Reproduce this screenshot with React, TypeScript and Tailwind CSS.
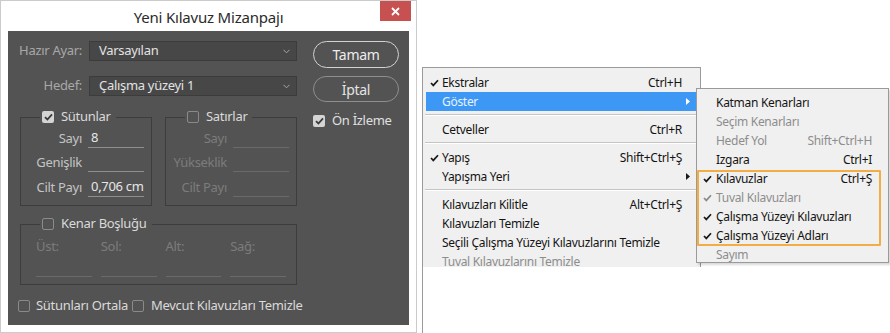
import React from "react";

const UI = { fontFamily: '"Noto Sans", "Liberation Sans", sans-serif' };

function Check({ on, dim }: { on?: boolean; dim?: boolean }) {
  if (on) {
    return (
      <span className="w-[12px] h-[12px] rounded-[2px] bg-[#d4d4d4] flex items-center justify-center shrink-0">
        <svg width="9" height="8" viewBox="0 0 9 8">
          <path d="M1 4.2 L3.4 6.5 L8 1.3" fill="none" stroke="#3a3a3a" strokeWidth="1.8" />
        </svg>
      </span>
    );
  }
  return (
    <span
      className={
        "block w-[12px] h-[12px] rounded-[2px] border shrink-0 " +
        (dim ? "border-[#6f6f6f]" : "border-[#8a8a8a]")
      }
    />
  );
}

function Field({ label, value, off }: { label: string; value?: string; off?: boolean }) {
  return (
    <div className="flex items-center h-[19px]">
      <span className={"w-[61px] text-right whitespace-nowrap " + (off ? "text-[#7c7c7c]" : "text-[#c4c4c4]")}>{label}</span>
      <span
        className={
          "ml-[6px] w-[56px] h-full border-b flex items-center pl-[3px] whitespace-nowrap text-[#e6e6e6] " +
          (off ? "border-[#6a6a6a]" : "border-[#8e8e8e]")
        }
      >
        {value}
      </span>
    </div>
  );
}

function Select({ text }: { text: string }) {
  return (
    <div className="ml-[7px] w-[208px] h-[20px] bg-[#474747] border border-[#3c3c3c] flex items-center pl-[9px] pr-[6px] text-[#e2e2e2]">
      <span className="flex-1 whitespace-nowrap">{text}</span>
      <svg width="7" height="5" viewBox="0 0 7 5">
        <path d="M0.5 0.8 L3.5 3.8 L6.5 0.8" fill="none" stroke="#a8a8a8" strokeWidth="1" />
      </svg>
    </div>
  );
}

function Group({ title, checked, children, w }: { title: string; checked?: boolean; children: React.ReactNode; w: string }) {
  return (
    <fieldset className={"border border-[#3d3d3d] " + w}>
      <legend className="ml-[19px] px-[2px] flex items-center gap-[7px] h-[16px]">
        <Check on={checked} />
        <span className="text-[#dadada] pr-[3px] whitespace-nowrap">{title}</span>
      </legend>
      {children}
    </fieldset>
  );
}

function Tick({ dim }: { dim?: boolean }) {
  return (
    <svg width="9" height="8" viewBox="0 0 9 8">
      <path d="M1 4 L3.3 6.4 L8 1.2" fill="none" stroke={dim ? "#8a8a8a" : "#1a1a1a"} strokeWidth="1.7" />
    </svg>
  );
}

type Item = { t: string; k?: string; tick?: boolean; off?: boolean; sub?: boolean; hi?: boolean; sep?: boolean };

const mainItems: Item[] = [
  { t: "Ekstralar", k: "Ctrl+H", tick: true },
  { t: "Göster", sub: true, hi: true },
  { t: "", sep: true },
  { t: "Cetveller", k: "Ctrl+R" },
  { t: "", sep: true },
  { t: "Yapış", k: "Shift+Ctrl+Ş", tick: true },
  { t: "Yapışma Yeri", sub: true },
  { t: "", sep: true },
  { t: "Kılavuzları Kilitle", k: "Alt+Ctrl+Ş" },
  { t: "Kılavuzları Temizle" },
  { t: "Seçili Çalışma Yüzeyi Kılavuzlarını Temizle" },
  { t: "Tuval Kılavuzlarını Temizle", off: true },
];

const subItems: Item[] = [
  { t: "Katman Kenarları" },
  { t: "Seçim Kenarları", off: true },
  { t: "Hedef Yol", k: "Shift+Ctrl+H", off: true },
  { t: "Izgara", k: "Ctrl+I" },
  { t: "Kılavuzlar", k: "Ctrl+Ş", tick: true },
  { t: "Tuval Kılavuzları", tick: true, off: true },
  { t: "Çalışma Yüzeyi Kılavuzları", tick: true },
  { t: "Çalışma Yüzeyi Adları", tick: true },
  { t: "Sayım", off: true },
];

function MenuRow({ it, sub }: { it: Item; sub?: boolean }) {
  if (it.sep) {
    return (
      <div className="h-[9px] pt-[3px] mx-[2px]">
        <div className="h-[1px] bg-[#c5c5c5]" />
        <div className="h-[1px] bg-white" />
      </div>
    );
  }
  const color = it.hi ? "text-[#e8f2ff]" : it.off ? "text-[#8d8d8d]" : "text-[#141414]";
  return (
    <div
      className={
        "h-[19px] flex items-center text-[12px] tracking-[-0.3px] " +
        color +
        (sub ? " mx-[1px]" : " mx-[3px]") +
        (it.hi ? " bg-[#3d97f4]" : "")
      }
    >
      <span className={"flex items-center " + (sub ? "w-[18px] pl-[5px]" : "w-[16px] pl-[4px]")}>
        {it.tick && <Tick dim={it.off} />}
      </span>
      <span className="flex-1 whitespace-nowrap">{it.t}</span>
      {it.k && <span className="whitespace-nowrap mr-[15px]">{it.k}</span>}
      {it.sub && (
        <span className="w-[15px] flex justify-start pl-[4px]">
          <svg width="4" height="7" viewBox="0 0 4 7">
            <path d="M0 0 L4 3.5 L0 7 Z" fill={it.hi ? "#ffffff" : "#1a1a1a"} />
          </svg>
        </span>
      )}
    </div>
  );
}

export default function App() {
  return (
    <div className="w-[890px] h-[333px] bg-white flex overflow-hidden" style={UI}>
      {/* dialog window */}
      <div className="w-[417px] h-[333px] border border-[#cbcbcb] bg-white flex flex-col shrink-0">
        <div className="h-[30px] grid grid-cols-[1fr_auto_1fr] items-start">
          <div />
          <div className="pt-[5px] text-[15px] tracking-[-0.2px] text-[#2a2a2a] whitespace-nowrap">Yeni Kılavuz Mizanpajı</div>
          <div className="flex justify-end pr-[5px]">
            <div className="w-[31px] h-[20px] bg-[#c75050] flex items-center justify-center">
              <svg width="9" height="9" viewBox="0 0 9 9">
                <path d="M1 1 L8 8 M8 1 L1 8" stroke="#ffffff" strokeWidth="1.8" />
              </svg>
            </div>
          </div>
        </div>
        <div className="mx-[7px] h-[294px] bg-[#535353] flex flex-col text-[13px] tracking-[-0.3px]">
          <div className="flex pt-[10px]">
            {/* left column */}
            <div className="w-[289px] flex flex-col">
              <div className="flex items-center">
                <span className="w-[74px] text-right text-[#a8a8a8] whitespace-nowrap">Hazır Ayar:</span>
                <Select text="Varsayılan" />
              </div>
              <div className="flex items-center mt-[15px]">
                <span className="w-[74px] text-right text-[#a8a8a8]">Hedef:</span>
                <Select text="Çalışma yüzeyi 1" />
              </div>
              <div className="flex gap-[13px] ml-[12px] mt-[13px]">
                <Group title="Sütunlar" checked w="w-[132px]">
                  <div className="flex flex-col pt-[4px] pb-[8px]">
                    <Field label="Sayı" value="8" />
                    <div className="mt-[5px]"><Field label="Genişlik" /></div>
                    <div className="mt-[6px]"><Field label="Cilt Payı" value="0,706 cm" /></div>
                  </div>
                </Group>
                <Group title="Satırlar" w="w-[132px]">
                  <div className="flex flex-col pt-[4px] pb-[8px]">
                    <Field label="Sayı" off />
                    <div className="mt-[5px]"><Field label="Yükseklik" off /></div>
                    <div className="mt-[6px]"><Field label="Cilt Payı" off /></div>
                  </div>
                </Group>
              </div>
              <div className="ml-[12px] mt-[10px]">
                <Group title="Kenar Boşluğu" w="w-[277px]">
                  <div className="grid grid-cols-4 gap-x-[9px] pl-[15px] pr-[10px] pt-[6px] pb-[7px]">
                    {["Üst:", "Sol:", "Alt:", "Sağ:"].map((l) => (
                      <div key={l} className="flex flex-col">
                        <span className="h-[16px] leading-[16px] text-[#7c7c7c]">{l}</span>
                        <span className="mt-[4px] h-[19px] border-b border-[#6a6a6a]" />
                      </div>
                    ))}
                  </div>
                </Group>
              </div>
            </div>
            {/* right column */}
            <div className="ml-[16px] w-[86px] flex flex-col">
              <div className="h-[27px] rounded-full border-[1.5px] border-[#d2d2d2] flex items-center justify-center text-[14px] text-[#ececec]">
                Tamam
              </div>
              <div className="mt-[8px] h-[26px] rounded-full border border-[#8e8e8e] flex items-center justify-center text-[14px] text-[#e4e4e4]">
                İptal
              </div>
              <div className="mt-[12px] flex items-center gap-[7px] h-[14px]">
                <Check on />
                <span className="text-[#e0e0e0] whitespace-nowrap">Ön İzleme</span>
              </div>
            </div>
          </div>
          <div className="flex items-center ml-[10px] mt-[13px] h-[16px] text-[#dadada] whitespace-nowrap">
            <Check />
            <span className="ml-[6px]">Sütunları Ortala</span>
            <span className="ml-[4px]"><Check /></span>
            <span className="ml-[7px]">Mevcut Kılavuzları Temizle</span>
          </div>
        </div>
      </div>

      {/* menus */}
      <div className="ml-[5px] mt-[67px] h-[266px] border-l border-[#9a9a9a] shrink-0">
        <div className="relative w-[278px] h-[200px] bg-[#f0f0f0] border-t border-r border-[#9a9a9a]">
          <div className="h-[200px] overflow-hidden pt-[5px]">
            {mainItems.map((it, i) => (
              <MenuRow key={i} it={it} />
            ))}
          </div>
          <div className="absolute left-[273px] top-[20px] w-[193px] h-[175px] bg-[#f0f0f0] border border-[#9a9a9a] pt-[4px] shadow-[2px_2px_2px_rgba(0,0,0,0.15)]">
            {subItems.map((it, i) => (
              <MenuRow key={i} it={it} sub />
            ))}
            <div className="absolute left-[0px] top-[81px] w-[184px] h-[76px] border-[2.5px] border-[#f2ae45] rounded-[1px]" />
          </div>
        </div>
      </div>
    </div>
  );
}
